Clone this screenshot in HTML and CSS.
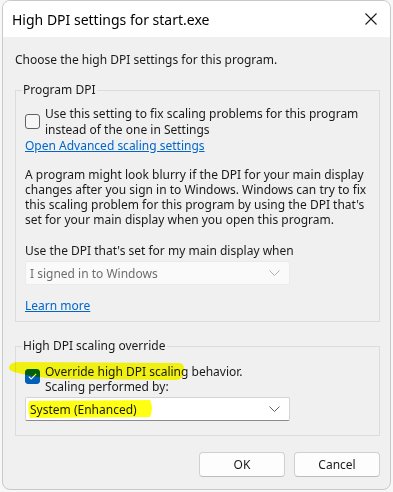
FILE: index.html
```html
<!DOCTYPE html>
<html lang="en">
<head>
  <meta charset="UTF-8">
  <title>High DPI settings for start.exe</title>
  <link rel="stylesheet" href="styles.css">
</head>
<body>

  <div class="window">
    <div class="titlebar">
      <span class="title">High DPI settings for start.exe</span>
      <svg class="close" width="12" height="12" viewBox="0 0 12 12">
        <path d="M0.5 0.5 L11.5 11.5 M11.5 0.5 L0.5 11.5" stroke="#1a1a1a" stroke-width="1.1" fill="none"/>
      </svg>
    </div>

    <div class="content">
      <p class="intro">Choose the high DPI settings for this program.</p>

      <fieldset class="group first">
        <legend>Program DPI</legend>
        <div class="check-row">
          <span class="box"></span>
          <span class="label">Use this setting to fix scaling problems for this program<br>instead of the one in Settings</span>
        </div>
        <a class="link" href="#">Open Advanced scaling settings</a>
        <p class="para">A program might look blurry if the DPI for your main display<br>changes after you sign in to Windows. Windows can try to fix<br>this scaling problem for this program by using the DPI that's<br>set for your main display when you open this program.</p>
        <p class="when">Use the DPI that's set for my main display when</p>
        <div class="select disabled">
          <span>I signed in to Windows</span>
          <svg width="11" height="6" viewBox="0 0 11 6"><path d="M0.5 0.5 L5.5 5.5 L10.5 0.5" stroke="#b0b0b0" fill="none"/></svg>
        </div>
        <a class="link more" href="#">Learn more</a>
      </fieldset>

      <fieldset class="group second">
        <legend>High DPI scaling override</legend>
        <div class="check-row checked-row">
          <span class="box checked">
            <svg width="9" height="7" viewBox="0 0 9 7"><path d="M0.8 3.6 L3.2 5.9 L8.2 0.9" stroke="#fff" stroke-width="1.1" fill="none"/></svg>
          </span>
          <span class="label tight">Override high DPI scaling behavior.<br>Scaling performed by:</span>
        </div>
        <div class="select">
          <span>System (Enhanced)</span>
          <svg width="11" height="6" viewBox="0 0 11 6"><path d="M0.5 0.5 L5.5 5.5 L10.5 0.5" stroke="#606060" fill="none"/></svg>
        </div>
      </fieldset>

      <div class="buttons">
        <button class="btn">OK</button>
        <button class="btn">Cancel</button>
      </div>
    </div>
  </div>

  <!-- highlighter marks drawn over the screenshot -->
  <svg class="marker" width="393" height="492" viewBox="0 0 393 492">
    <path d="M9,367 Q10,362 20,362 L180,363 Q185,364 184,372 Q183,380 176,380 L60,379 Q30,377 14,372 Q8,370 9,367 Z" fill="#ffff14"/>
    <path d="M29,401 L150,400 Q154,408 150,417 L30,418 Q27,409 29,401 Z" fill="#ffff14"/>
  </svg>

</body>
</html>
```

FILE: styles.css
```css
body {
  margin: 0;
  position: relative;
  width: 393px;
  height: 492px;
  overflow: hidden;
  background: #f7f7f7;
  font-family: "Noto Sans", "Segoe UI", sans-serif;
  font-size: 12px;
  color: #1a1a1a;
}
.window {
  margin-left: 2px;
  width: 389px;
  height: 490px;
  box-sizing: border-box;
  border: 1px solid #c9c9c9;
  border-radius: 8px;
  background: #f0f0f0;
  overflow: hidden;
  display: flex;
  flex-direction: column;
}
.titlebar {
  height: 36px;
  background: #fff;
  display: flex;
  align-items: center;
  justify-content: space-between;
  padding: 0 13px 0 9px;
  flex-shrink: 0;
}
.title {
  font-size: 14px;
  color: #000;
}
.content {
  padding: 0 10px 0 12px;
  display: flex;
  flex-direction: column;
}
.intro {
  margin: 15px 0 0;
  line-height: 16px;
}
.group {
  margin: 0;
  border: 1px solid #dcdcdc;
  padding: 0 10px 7px 9px;
}
.group legend {
  padding: 0 1px;
  margin-left: -3px;
  line-height: 16px;
}
.first {
  margin-top: 14px;
}
.second {
  margin-top: 16px;
  padding-bottom: 14px;
}
.check-row {
  display: flex;
  align-items: center;
  gap: 5px;
  margin-top: 8px;
  line-height: 16px;
}
.checked-row {
  margin-top: 10px;
  align-items: flex-start;
}
.box {
  width: 13px;
  height: 13px;
  border: 1px solid #616161;
  border-radius: 3px;
  background: #f6f6f6;
  flex-shrink: 0;
  margin-top: -1px;
}
.box.checked {
  background: #005fb8;
  border-color: #005fb8;
  display: flex;
  align-items: center;
  justify-content: center;
  margin-top: 5px;
}
.label.tight {
  line-height: 15px;
}
.link {
  display: block;
  color: #0066cc;
  line-height: 16px;
  width: max-content;
}
.para {
  margin: 13px 0 0;
  line-height: 15px;
}
.when {
  margin: 16px 0 0;
  line-height: 16px;
}
.select {
  margin-top: 3px;
  width: 265px;
  height: 24px;
  box-sizing: border-box;
  background: #fff;
  border: 1px solid #d4d4d4;
  border-bottom-color: #8c8c8c;
  border-radius: 2px;
  display: flex;
  align-items: center;
  justify-content: space-between;
  padding: 0 9px 0 4px;
}
.select.disabled {
  margin-top: 2px;
  background: #fafafa;
  border-color: #ebebeb;
  color: #6e6e6e;
}
.more {
  margin-top: 13px;
}
.buttons {
  display: flex;
  justify-content: flex-end;
  gap: 9px;
  margin-top: 16px;
}
.btn {
  width: 86px;
  height: 25px;
  background: #fdfdfd;
  border: 1px solid #d0d0d0;
  border-bottom-color: #bdbdbd;
  border-radius: 4px;
  font-family: inherit;
  font-size: 12px;
  color: #1a1a1a;
}
.marker {
  position: absolute;
  top: 0;
  left: 0;
  mix-blend-mode: multiply;
  pointer-events: none;
}
```
